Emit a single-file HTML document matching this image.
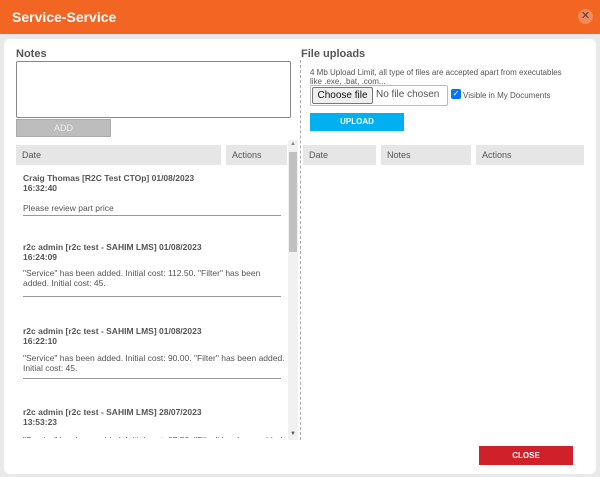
<!DOCTYPE html>
<html><head><style>
*{margin:0;padding:0;box-sizing:border-box}
body{width:600px;height:477px;background:#e9e9e9;font-family:"Liberation Sans",Arial,sans-serif;position:relative;overflow:hidden;color:#555}
.a{position:absolute}
.hdr{left:0;top:0;width:600px;height:34px;background:#f26522}
.hdr h1{position:absolute;left:12px;top:9px;color:#fff;font-size:14px;font-weight:bold}
.x{left:578px;top:9px;width:15px;height:15px;border-radius:50%;background:#f58a58;color:#444;font-size:11px;line-height:15px;text-align:center}
.panel{left:4px;top:39px;width:592px;height:435px;background:#fff;border-radius:6px}
.lbl{font-size:11px;font-weight:bold;color:#555}
.th{background:#e6e6e6;height:20px;font-size:9px;line-height:20px;padding-left:6px;color:#555}
.b{font-size:8.5px;font-weight:bold;line-height:10px;color:#555}
.m{font-size:8.5px;line-height:10px;color:#555}
.ln{height:1px;background:#999;width:258px;left:23px}
</style></head><body>
<div class="a hdr"><h1>Service-Service</h1></div>
<div class="a x">✕</div>
<div class="a panel"></div>
<div class="a lbl" style="left:16px;top:48px">Notes</div>
<div class="a" style="left:16px;top:61px;width:275px;height:57px;border:1px solid #888;border-radius:2px"></div>
<div class="a" style="left:16px;top:119px;width:95px;height:18px;background:#bdbdbd;border:1px solid #aaa;color:#eee;font-size:9px;text-align:center;line-height:16px">ADD</div>
<div class="a th" style="left:16px;top:145px;width:205px">Date</div>
<div class="a th" style="left:226px;top:145px;width:61px">Actions</div>
<div class="a" style="left:288px;top:140px;width:10px;height:300px;background:#f1f1f1"></div>
<div class="a" style="left:289px;top:152px;width:8px;height:100px;background:#c1c1c1"></div>
<div class="a" style="left:290px;top:141px;font-size:6px;color:#888">▲</div>
<div class="a" style="left:290px;top:431px;font-size:6px;color:#555">▼</div>
<div class="a" style="left:300px;top:60px;height:380px;border-left:1px dashed #aaa"></div>
<div class="a" style="left:16px;top:166px;width:272px;height:272px;overflow:hidden">
<div class="a b" style="left:7px;top:7px">Craig Thomas [R2C Test CTOp] 01/08/2023<br>16:32:40</div>
<div class="a m" style="left:7px;top:37px">Please review part price</div>
<div class="a ln" style="left:7px;top:49px"></div>
<div class="a b" style="left:7px;top:76px">r2c admin [r2c test - SAHIM LMS] 01/08/2023<br>16:24:09</div>
<div class="a m" style="left:7px;top:102px;width:260px">"Service" has been added. Initial cost: 112.50. "Filter" has been added. Initial cost: 45.</div>
<div class="a ln" style="left:7px;top:130px"></div>
<div class="a b" style="left:7px;top:160px">r2c admin [r2c test - SAHIM LMS] 01/08/2023<br>16:22:10</div>
<div class="a m" style="left:7px;top:187px;width:262px">"Service" has been added. Initial cost: 90.00. "Filter" has been added. Initial cost: 45.</div>
<div class="a ln" style="left:7px;top:212px"></div>
<div class="a b" style="left:7px;top:241px">r2c admin [r2c test - SAHIM LMS] 28/07/2023<br>13:53:23</div>
<div class="a m" style="left:7px;top:269px;width:262px">"Service" has been added. Initial cost: 67.50. "Filter" has been added.</div>
</div>
<div class="a lbl" style="left:301px;top:48px">File uploads</div>
<div class="a" style="left:310px;top:68px;font-size:8px;line-height:9px;color:#555;width:265px">4 Mb Upload Limit, all type of files are accepted apart from executables like .exe, .bat, .com...</div>
<div class="a" style="left:310px;top:85px;width:138px;height:21px;border:1px solid #bbb;border-radius:2px"></div>
<div class="a" style="left:312px;top:87px;width:61px;height:17px;background:#efefef;border:1px solid #777;border-radius:2px;font-size:10px;color:#111;text-align:center;line-height:15px">Choose file</div>
<div class="a" style="left:376px;top:89px;font-size:10px;color:#555">No file chosen</div>
<div class="a" style="left:451px;top:89px;width:10px;height:10px;background:#0075ff;border-radius:2px;color:#fff;font-size:8px;line-height:10px;text-align:center">✓</div>
<div class="a" style="left:463px;top:91px;font-size:8px;color:#555">Visible in My Documents</div>
<div class="a" style="left:310px;top:113px;width:94px;height:18px;background:#00b0f0;color:#fff;font-size:8px;font-weight:bold;text-align:center;line-height:18px">UPLOAD</div>
<div class="a th" style="left:303px;top:145px;width:73px">Date</div>
<div class="a th" style="left:381px;top:145px;width:90px">Notes</div>
<div class="a th" style="left:476px;top:145px;width:108px">Actions</div>
<div class="a" style="left:479px;top:446px;width:94px;height:19px;background:#d0212a;color:#fff;font-size:8px;font-weight:bold;text-align:center;line-height:19px">CLOSE</div>
</body></html>
